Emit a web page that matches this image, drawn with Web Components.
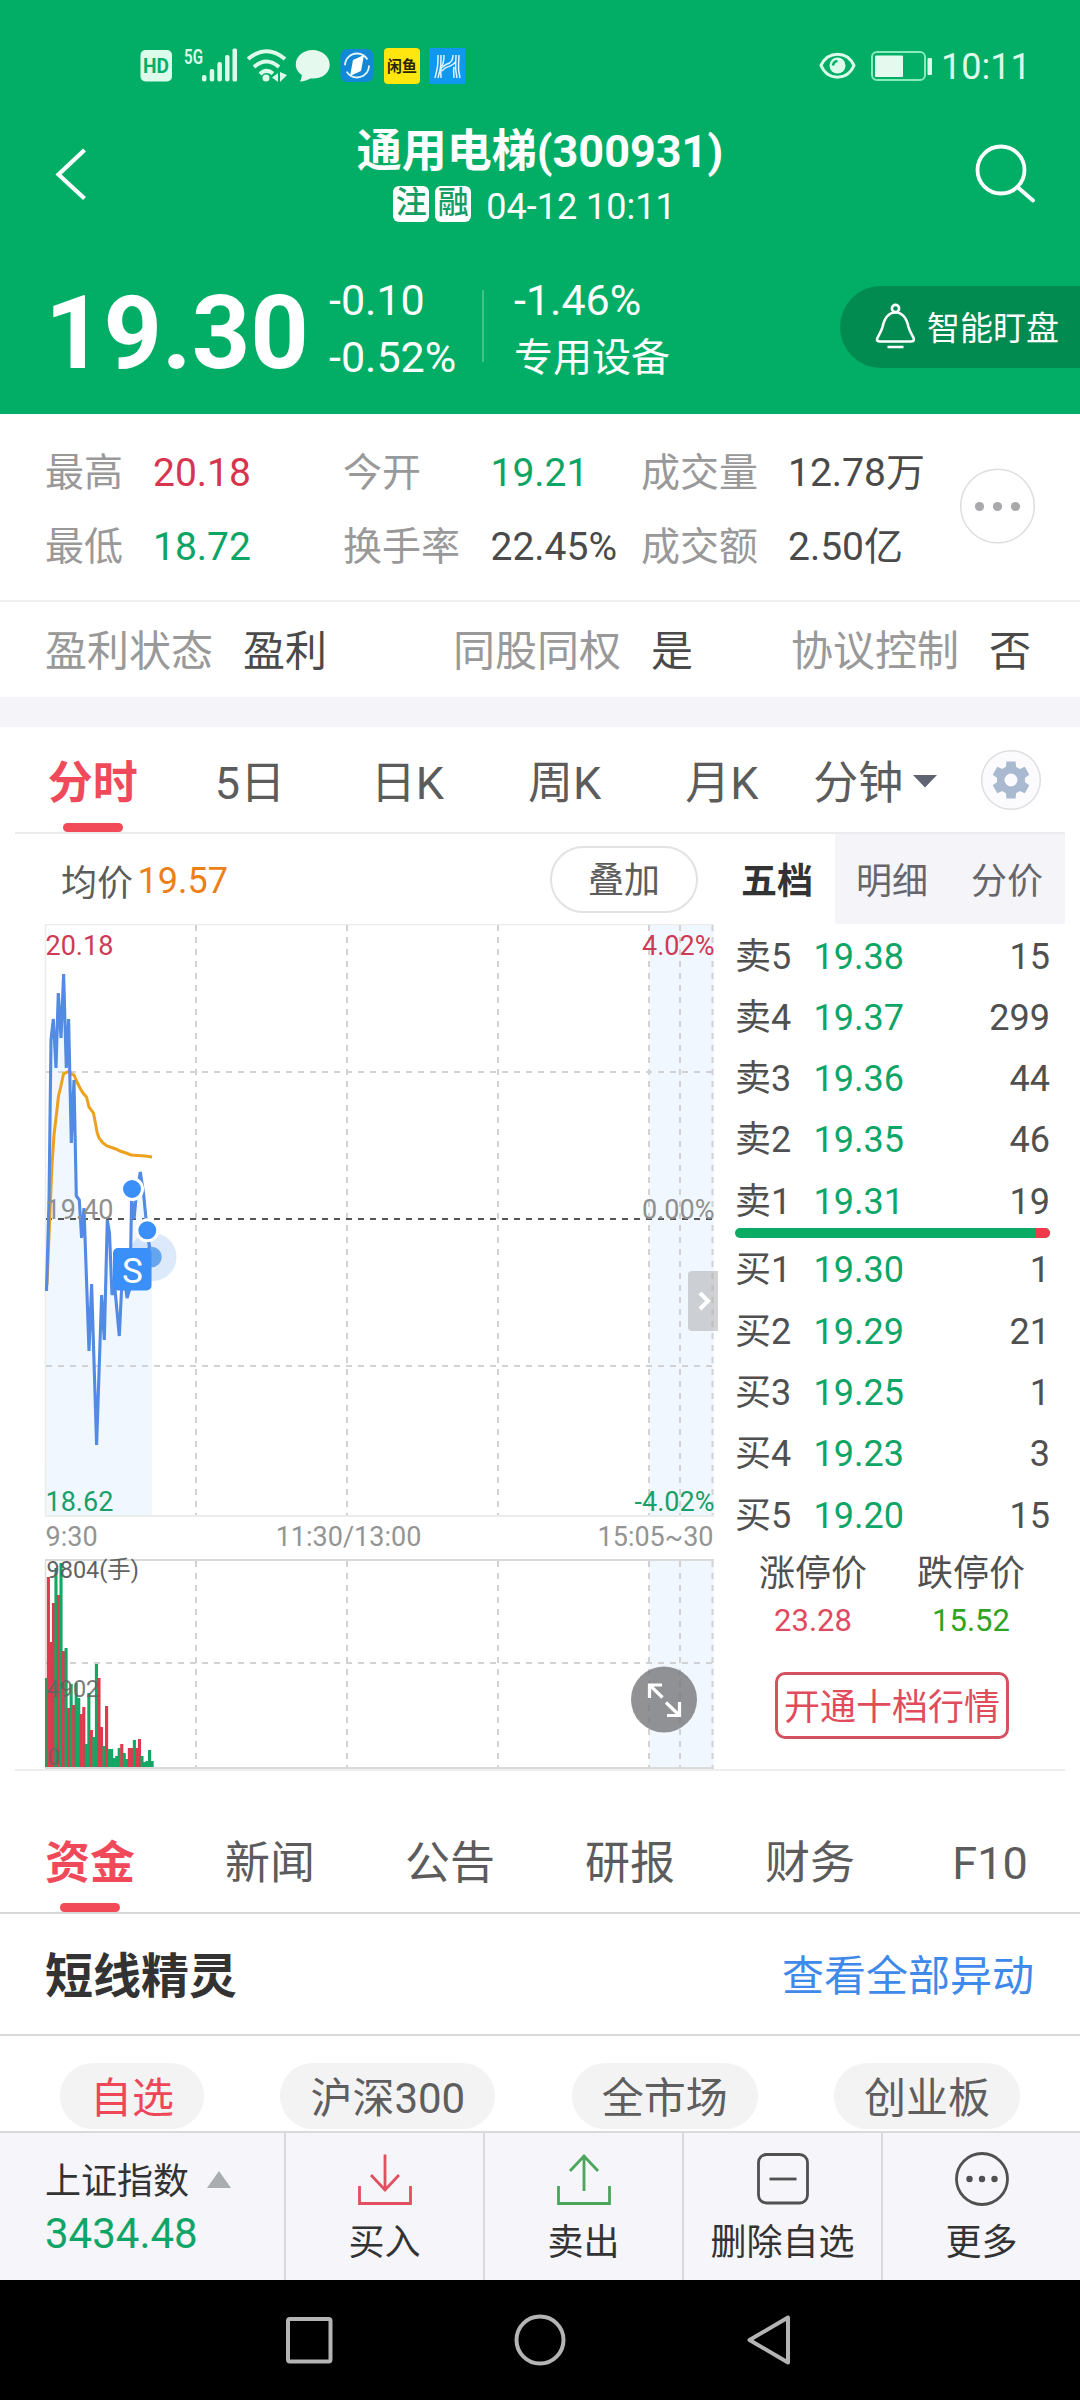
<!DOCTYPE html>
<html lang="zh-CN">
<head>
<meta charset="utf-8">
<meta name="viewport" content="width=1080">
<title>通用电梯(300931)</title>
<style>
  html, body { margin: 0; padding: 0; }
  body {
    width: 1080px; height: 2400px; overflow: hidden; background: #fff;
    font-family: Roboto, "Noto Sans CJK SC", sans-serif;
    --brand: #02ae66; --up: #d8344e; --down: #0ca565; --accent: #f04a5a;
    --text: #4a4a4a; --muted: #999; --panel: #f4f4f9;
  }
</style>
</head>
<body>
<stock-app></stock-app>

<script>
const define = (name, html, setup) => {
  const tpl = document.createElement('template');
  tpl.innerHTML = `<style>*{box-sizing:border-box} :host{display:block;box-sizing:border-box;white-space:nowrap} svg{display:block;flex:none}</style>` + html;
  customElements.define(name, class extends HTMLElement {
    constructor() {
      super();
      this.attachShadow({ mode: 'open' }).append(tpl.content.cloneNode(true));
      if (setup) setup(this, this.shadowRoot);
    }
  });
};

/* ---------- system status bar ---------- */
define('status-bar', `
<style>
  :host { height: 127px; padding: 4px 0 0 140px; display: flex; align-items: center; color: #dcfbea; }
  .time { font-size: 36px; line-height: 40px; margin: 3px 0 0 6px; width: 139px; }
</style>
<svg width="33" height="36"><rect x="0.5" y="2" width="31.5" height="31.5" rx="5" fill="#dcfbea"/><text x="16" y="25" text-anchor="middle" font-size="20" font-weight="700" textLength="26" lengthAdjust="spacingAndGlyphs" fill="#02ae66">HD</text></svg>
<svg width="54" height="52" viewBox="0 -8 54 52" style="margin-left:11px" fill="#dcfbea"><text x="0" y="15.500" font-size="20" font-weight="600" textLength="19" lengthAdjust="spacingAndGlyphs">5G</text><rect x="18" y="27" width="4.500" height="6.500" rx="2"/><rect x="25.700" y="21" width="4.500" height="12.500" rx="2"/><rect x="33.400" y="14" width="4.500" height="19.500" rx="2"/><rect x="41" y="7" width="4.500" height="26.500" rx="2"/><rect x="48.500" y="0.500" width="4.500" height="33" rx="1.500"/></svg>
<svg width="40" height="36" style="margin-left:9px" fill="none" stroke="#dcfbea" stroke-width="4"><path d="M1 11Q19.500-4.500 38 11M7 19Q19.500 8 32 19M13 26Q19 20 26 25.500"/><circle cx="19" cy="30" r="3.500" fill="#dcfbea" stroke="none"/><path d="M31 25v9l-6-4.500zM33 24v10l7-7z" fill="#dcfbea" stroke="none"/></svg>
<svg width="36" height="36" style="margin-left:8px"><path d="M17.500 2C8 2 .8 8.500 .8 16.500c0 4.500 2.500 8 6 10.500 0 2.500-.8 5-2 6.500 4.500 0 8-1.500 10.500-3 12 1 19.400-5.500 19.400-14C34.700 8.500 27 2 17.500 2z" fill="#e6f9ef"/></svg>
<svg width="34" height="36" style="margin-left:9px"><rect x="0.500" y="1" width="33" height="33" rx="7" fill="#1189d6"/><circle cx="17" cy="17.500" r="12" fill="none" stroke="#e6f5ff" stroke-width="1.800" stroke-dasharray="31 6.700"/><path d="M13 12l11-5-3 16-11 5z" fill="#fff"/></svg>
<svg width="36" height="36" style="margin-left:10px"><rect width="36" height="36" rx="4" fill="#ffe60f"/><text x="18" y="24" text-anchor="middle" font-size="15.500" font-weight="700" fill="#2a2608" textLength="30" lengthAdjust="spacingAndGlyphs">闲鱼</text></svg>
<svg width="36" height="36" style="margin-left:9px"><rect width="36" height="36" fill="#1098ef"/><g fill="none" stroke="#e2f4ff" stroke-width="1.500"><path d="M9 7C9 16 9 18 6 30M12 7C12 17 12 19 9 30M15 7C15 12 15 14 13 18M30 7C30 16 28 19 31 30M27 7C27 16 25 17 28 30M24 7C24 12 22 15 18 16L13 19C11 21 12 26 12 30M26 14C24 18 20 18 16 20L13 23M25 19C24 23 25 26 25 30"/></g></svg>
<svg width="37" height="30" style="margin-left:auto;margin-right:15px" fill="none" stroke="#dcfbea"><path d="M2 14.500C9-.5 28-.5 35 14.500 28 30 9 30 2 14.500z" stroke-width="3"/><circle cx="18.500" cy="14.500" r="8" fill="#dcfbea" stroke="none"/><path d="M14 14.500q.5-4 4.500-4.500" stroke="#02ae66" stroke-width="2.500"/></svg>
<svg width="64" height="32"><rect x="1" y="2" width="53" height="28" rx="5" fill="none" stroke="#86ecbc" stroke-width="2"/><rect x="4" y="5.500" width="28" height="21.500" rx="1" fill="#e6f9ef"/><rect x="56.500" y="8" width="4.500" height="17" rx="1" fill="#dcfbea"/></svg>
<div class="time">10:11</div>`);

/* ---------- title bar ---------- */
define('title-bar', `
<style>
  :host { height: 126px; display: grid; grid-template-columns: 200px 1fr 200px; align-items: start; color: #fff; }
  .name { font-size: 45px; line-height: 50px; font-weight: 700; text-align: center; }
  .meta { display: flex; justify-content: center; align-items: center; margin-top: 9px; height: 36px; font-size: 36px; padding-right: 11px; }
  .meta span { line-height: 40px; margin-left: 15px; padding-top: 5px; }
  i { font-style: normal; width: 36px; height: 36px; border-radius: 6px; background: #fff; color: #149c62; font-size: 31px; font-weight: 500; line-height: 34px; text-align: center; margin-right: 6px; }
  i + i { margin-right: 0; }
</style>
<svg width="60" height="60" style="margin:17px 0 0 45px"><path d="M39.500 6 13.500 30.500 39.500 54.500" fill="none" stroke="#fff" stroke-width="4.200"/></svg>
<div><div class="name"><slot></slot></div><div class="meta"><i>注</i><i>融</i><span><slot name="time"></slot></span></div></div>
<svg width="70" height="70" style="margin:13px 0 0 91px"><g fill="none" stroke="#fff" stroke-width="3.800" stroke-linecap="round"><circle cx="30" cy="30" r="23.500"/><path d="M47 47.500 62 60.500"/></g></svg>`);

/* ---------- price summary ---------- */
define('price-panel', `
<style>
  :host { height: 161px; padding: 0 0 9px 45px; display: flex; align-items: center; color: #fff; }
  .price { width: 284px; font-size: 102px; font-weight: 700; line-height: 110px; padding-top: 7px; }
  .col { font-size: 43px; line-height: 57px; }
  .chg { width: 153px; }
  .rule { width: 2px; height: 72px; margin: 0 30px 6px 0; background: rgba(255,255,255,.25); }
  .ind { font-size: 39px; padding: 1px 0 0 0; height: 57px; }
  .watch { margin: 0 0 5px auto; width: 240px; height: 82px; border-radius: 41px 0 0 41px; background: #028b51; display: flex; align-items: center; padding: 0 0 1px 35px; font-size: 33px; }
  .watch svg { margin-right: 12px; }
</style>
<div class="price">19.30</div>
<div class="col chg"><div>-0.10</div><div>-0.52%</div></div>
<div class="rule"></div>
<div class="col"><div>-1.46%</div><div class="ind">专用设备</div></div>
<div class="watch"><svg width="40" height="46" fill="none" stroke="#fff" stroke-width="2.600"><circle cx="20.500" cy="5.500" r="3.600"/><path d="M20.500 9.500C12 9.500 9 17 7.500 24 6 30 2 34 2 36.500 2 38 3 38.500 5 38.500H36C38 38.500 39 38 39 36.500 39 34 35 30 33.500 24 32 17 29 9.500 20.500 9.500zM12.500 44H28.500"/></svg>智能盯盘</div>`);

/* ---------- quote figures ---------- */
define('quote-stats', `
<style>
  :host { height: 188px; padding: 22px 0 0 45px; border-bottom: 2px solid #efefef; display: flex; font-size: 39px; line-height: 74px; color: var(--text); }
  .g { width: 915px; display: grid; grid-template-columns: 108px 190px 147.5px 150.5px 147px 1fr; grid-auto-rows: 74px; }
  .l { color: var(--muted); } .u { color: var(--up); } .d { color: var(--down); }
  svg { margin-top: 32px; }
</style>
<div class="g">
<span class="l">最高</span><span class="u">20.18</span><span class="l">今开</span><span class="d">19.21</span><span class="l">成交量</span><span>12.78万</span>
<span class="l">最低</span><span class="d">18.72</span><span class="l">换手率</span><span>22.45%</span><span class="l">成交额</span><span>2.50亿</span>
</div>
<svg width="76" height="77"><circle cx="37.500" cy="38" r="36.800" fill="none" stroke="#dedede" stroke-width="1.500"/><g fill="#a9a9ab"><circle cx="19.500" cy="38.500" r="4.600"/><circle cx="37.500" cy="38.500" r="4.600"/><circle cx="55.500" cy="38.500" r="4.600"/></g></svg>`);

define('flag-item', `
<style>:host { display: flex; gap: 30px; } .l { color: var(--muted); }</style>
<span class="l"><slot name="label"></slot></span><span><slot></slot></span>`);

define('listing-flags', `
<style>
  :host { height: 95px; padding: 4px 0 0 45px; display: grid; grid-template-columns: 408px 338px auto; align-items: center; font-size: 42px; line-height: 60px; color: var(--text); }
</style>
<flag-item><span slot="label">盈利状态</span>盈利</flag-item>
<flag-item><span slot="label">同股同权</span>是</flag-item>
<flag-item><span slot="label">协议控制</span>否</flag-item>`);

/* ---------- period tabs ---------- */
define('tab-item', `
<style>
  :host { flex: 1; display: flex; flex-direction: column; align-items: center; justify-content: flex-end; color: #5c5c5c; font-size: 45px; height: 100%; }
  .t { display: flex; align-items: center; line-height: 60px; }
  .bar { width: 60px; height: 9px; border-radius: 5px; margin-top: 9.5px; }
  :host([active]) { color: var(--accent); font-weight: 700; }
  :host([active]) .bar { background: #f24a57; }
</style><div class="t"><slot></slot></div><div class="bar"></div>`);

define('period-tabs', `
<style>
  :host { height: 107px; margin: 0 15px; display: flex; border-bottom: 2px solid #ececee; align-items: center; }
  .tabs { width: 944px; height: 105px; display: flex; margin-left: -1px; }
  .tri { margin: 0 8px 4px 10px; }
</style>
<div class="tabs"><tab-item active>分时</tab-item><tab-item>5日</tab-item><tab-item>日K</tab-item><tab-item>周K</tab-item><tab-item>月K</tab-item><tab-item>分钟<svg class="tri" width="24" height="13"><path d="M0 0H24L12 12.500z" fill="#5f6372"/></svg></tab-item></div>
<svg width="62" height="62" style="margin-left:22px"><circle cx="31" cy="31" r="29.300" fill="#fbfbfd" stroke="#dfdfe3" stroke-width="1.500"/><g transform="translate(31 31)" fill="#a9bad0"><g id="teeth"></g><path fill-rule="evenodd" d="M0-14A14 14 0 1 0 0 14 14 14 0 1 0 0-14zM0-6.500A6.500 6.500 0 1 1 0 6.500 6.500 6.500 0 1 1 0-6.500z"/></g></svg>`,
(host, root) => {
  root.getElementById('teeth').innerHTML = [0, 60, 120, 180, 240, 300].map(a => `<path transform="rotate(${a})" d="M-5.500-10 -4.500-18.500H4.500L5.500-10z"/>`).join('');
});

/* ---------- intraday price and volume chart ---------- */
define('intraday-chart', `
<style>
  :host { width: 705px; }
  .legend { height: 90px; padding: 0 22px 0 46px; display: flex; align-items: center; font-size: 36px; color: #5c5c5c; }
  .legend span { padding-top: 1px; }
  .legend .avg { color: #ee7f18; margin-left: 4.5px; padding-top: 3px; }
  .add { margin-left: auto; width: 148px; height: 67px; border: 2px solid #e2e2e2; border-radius: 34px; text-align: center; line-height: 66px; }
</style>
<div class="legend"><span>均价</span><span class="avg">19.57</span><div class="add">叠加</div></div>
<svg width="705" height="846" viewBox="15 924 705 846" font-size="27">
  <rect x="649" y="925" width="65" height="590" fill="#f1f7fe"/><rect x="649" y="1560" width="65" height="208" fill="#f1f7fe"/>
  <path id="area" fill="#f0f7fe"/>
  <g stroke="#ececec" stroke-width="1.500" fill="none"><path d="M45.500 1515.500V924.500H714"/><path d="M45 1516H714" stroke-width="2"/><path d="M45.500 1560V1767" stroke="#ddd"/></g>
  <g stroke="#d2d2d4" stroke-width="2" stroke-dasharray="6 6" fill="none">
    <path d="M196 925V1515M347 925V1515M498 925V1515M649 925V1515M680 925V1515M712.500 925V1515M46 1072H713M46 1366H713"/>
    <path d="M196 1561V1767M347 1561V1767M498 1561V1767M649 1561V1767M680 1561V1767M712.500 1561V1767M46 1663H713"/>
  </g>
  <path d="M46 1219H713" stroke="#555" stroke-width="2" stroke-dasharray="6 6"/>
  <g id="bars"></g>
  <path d="M45 1560H714M45 1768H714" stroke="#dadada" stroke-width="2"/>
  <polyline fill="none" stroke="#eca11f" stroke-width="3" points="47,1285 50.500,1200 52,1165 54,1135 56.500,1114 58.500,1096 60.500,1088 63.500,1074 66,1072.500 69,1071.300 72,1074.500 74,1075 77,1082 80,1088 83,1093 86.500,1097 89,1107 93.500,1113 95,1121 97,1132 99,1138 103,1143 107,1146 113,1148 116,1149 120,1151 126,1153 131,1155 138,1155.500 145,1156 152,1157"/>
  <polyline id="line" fill="none" stroke="#528ae4" stroke-width="3.100" stroke-linejoin="bevel" points="46.500,1291 49,1200 50,1120 51,1040 53.300,1019 56,1068 58.300,993 61,1038 63.600,974 66.300,1068 68.600,1019 71.300,1143 74,1080 76.300,1196 79.300,1200 81.600,1238 84,1208 89,1351 91.600,1284 96.600,1445 101.600,1295 104.300,1340 107.300,1220 109.500,1233 112,1295 114.600,1285 119.300,1336 122,1280 124.500,1277 127,1298 130,1288 131.600,1198 134,1219 136,1198 140.300,1172 143.500,1193 146,1219 149,1244 152,1257"/>
  <circle cx="152.500" cy="1257" r="24" fill="#4a90e8" fill-opacity=".2"/><circle cx="151.500" cy="1257" r="10.300" fill="#66a6ef"/>
  <path d="M149 1242V1256" stroke="#528ae4" stroke-width="2.500"/>
  <g fill="#3a8ff8" stroke="#fff" stroke-width="3"><circle cx="132" cy="1189" r="10.500"/><circle cx="147.300" cy="1230.300" r="10.500"/></g>
  <rect x="113" y="1248" width="38.500" height="42.500" rx="5" fill="#3a8ff8"/><text x="132.500" y="1283" text-anchor="middle" font-size="35" fill="#fff">S</text>
  <text x="45.500" y="955" fill="#cf3a55">20.18</text><text x="714.500" y="955" text-anchor="end" fill="#cf3a55">4.02%</text>
  <text x="45.500" y="1218.500" fill="#8f8f8f">19.40</text><text x="714.500" y="1218.500" text-anchor="end" fill="#8f8f8f">0.00%</text>
  <text x="45.500" y="1510.500" fill="#199f68">18.62</text><text x="714.500" y="1510.500" text-anchor="end" fill="#199f68">-4.02%</text>
  <g fill="#949494"><text x="45.500" y="1546">9:30</text><text x="348.500" y="1546" text-anchor="middle">11:30/13:00</text><text x="713.500" y="1546" text-anchor="end">15:05~30</text></g>
  <g fill="#626262" font-size="23.500"><text x="46.500" y="1578">9804(手)</text><text x="46.500" y="1697" fill-opacity=".85">4902</text><text x="47" y="1765" fill-opacity=".7">0</text></g>
  <path d="M718 1271H692Q688 1271 688 1275V1327Q688 1331 692 1331H718z" fill="#a8a8a8" fill-opacity=".5"/><path d="M700 1293 708 1301 700 1309" fill="none" stroke="#fff" stroke-width="4"/>
  <circle cx="664" cy="1699.500" r="33" fill="#77777a" fill-opacity=".8"/>
  <g fill="none" stroke="#fff" stroke-width="3.200"><path d="M662 1685H649.500V1698M650 1685.500 662.500 1697.500M667 1715.500H679.500V1702M679 1715 666 1702.500"/></g>
</svg>`,
(host, root) => {
  const pts = root.getElementById('line').getAttribute('points');
  root.getElementById('area').setAttribute('d', 'M46 1515L' + pts.split(' ').join('L') + 'V1515z');
  // One entry per minute: colour (r/g) and the top of the bar
  const bars = 'g1678 r1577 r1642 r1603 g1568 r1595 g1563 r1651 g1648 r1708 g1684 r1705 g1683 g1698 r1714 r1707 g1744 g1693 r1730 g1737 g1664 r1678 r1727 g1746 r1706 g1749 g1749 g1758 g1756 g1748 r1744 g1753 g1759 r1748 r1748 g1740 r1748 r1739 g1756 g1762 g1761 g1750 g1761'.split(' ');
  root.getElementById('bars').innerHTML = bars.map((b, i) => {
    const y = +b.slice(1), x = Math.max(45, 44.3 + 2.53 * i);
    return `<rect x="${x.toFixed(2)}" y="${y}" width="3.1" height="${1767 - y}" fill="${b[0] === 'r' ? '#dd3a4e' : '#12a762'}"/>`;
  }).join('');
});

/* ---------- order book ---------- */
define('depth-row', `
<style>
  :host { display: flex; height: 61.3px; line-height: 61.3px; font-size: 36px; color: #505050; }
  .n { width: 78.5px; } .p { color: #0ea566; } .q { margin-left: auto; }
</style><span class="n"></span><span class="p"></span><span class="q"></span>`);

define('order-book', `
<style>
  :host { width: 345px; }
  .tabs { display: grid; grid-template-columns: 1fr 1fr 1fr; height: 90px; line-height: 90px; text-align: center; font-size: 36px; color: #66666c; background: var(--panel); }
  .tabs div { padding: 3px 1px 0 0; }
  .tabs .on { background: #fff; color: #333; font-weight: 700; }
  .body { padding: 2.5px 15px 0 15px; }
  .ratio { display: flex; height: 9.5px; margin: -4.5px 0 2.5px 0; border-radius: 5px; overflow: hidden; background: #0aab64; }
  .ratio i { margin-left: auto; width: 15px; background: #f03a4c; }
  .limits { display: grid; grid-template-columns: 158px 158px; padding: 5px 0 0 14px; text-align: center; line-height: 45px; font-size: 36px; color: #505050; row-gap: 1px; }
  .limits .v { font-size: 31px; }
  .open { width: 234px; height: 67px; margin: 29px 0 0 55px; border: 3px solid #d4525f; border-radius: 10px; color: #e04c5c; text-align: center; line-height: 66px; font-size: 36px; }
</style>
<div class="tabs"><div class="on">五档</div><div>明细</div><div>分价</div></div>
<div class="body"><div id="asks"></div><div class="ratio"><i></i></div><div id="bids"></div></div>
<div class="limits"><span>涨停价</span><span>跌停价</span><span class="v" style="color:#e04a60">23.28</span><span class="v" style="color:#2fa323">15.52</span></div>
<div class="open">开通十档行情</div>`,
(host, root) => {
  const fill = (id, rows) => rows.forEach(([n, p, q]) => {
    const row = document.createElement('depth-row'), r = row.shadowRoot;
    r.querySelector('.n').textContent = n;
    r.querySelector('.p').textContent = p;
    r.querySelector('.q').textContent = q;
    root.getElementById(id).append(row);
  });
  fill('asks', [['卖5', '19.38', 15], ['卖4', '19.37', 299], ['卖3', '19.36', 44], ['卖2', '19.35', 46], ['卖1', '19.31', 19]]);
  fill('bids', [['买1', '19.30', 1], ['买2', '19.29', 21], ['买3', '19.25', 1], ['买4', '19.23', 3], ['买5', '19.20', 15]]);
});

/* ---------- information sections ---------- */
define('section-tabs', `
<style>:host { height: 143px; display: flex; border-bottom: 2px solid #d9d9d9; }</style>
<tab-item active>资金</tab-item><tab-item>新闻</tab-item><tab-item>公告</tab-item><tab-item>研报</tab-item><tab-item>财务</tab-item><tab-item>F10</tab-item>`);

define('section-head', `
<style>
  :host { height: 122px; padding: 0 46px 4px 45px; display: flex; align-items: center; justify-content: space-between; border-bottom: 2px solid #d9d9d9; font-size: 48px; font-weight: 700; color: #333; }
  .more { font-size: 42px; font-weight: 400; color: #3f89ea; }
</style><div><slot></slot></div><div class="more"><slot name="more"></slot></div>`);

define('filter-chip', `
<style>
  :host { height: 66px; padding: 4px 30px 0; border-radius: 33px; background: #f3f3f4; color: #5e5e5e; font-size: 42px; line-height: 63px; }
  :host([active]) { color: #ee4757; }
</style><slot></slot>`);

define('filter-row', `
<style>:host { height: 95px; padding: 27px 0 0 60px; display: flex; align-items: flex-start; gap: 76.4px; }</style>
<filter-chip active>自选</filter-chip><filter-chip>沪深300</filter-chip><filter-chip>全市场</filter-chip><filter-chip>创业板</filter-chip>`);

/* ---------- bottom actions ---------- */
define('trade-action', `
<style>
  :host { flex: 1; border-left: 2px solid #d9d9dc; display: flex; flex-direction: column; align-items: center; padding-top: 16px; font-size: 36px; line-height: 50px; color: #333; }
  .t { margin-top: 9px; }
</style><slot name="icon"></slot><div class="t"><slot></slot></div>`);

define('trade-bar', `
<style>
  :host { height: 149px; border-top: 2px solid #d9d9dc; background: #f5f5fa; display: flex; }
  .idx { width: 284px; padding: 24px 0 0 45px; }
  .n { display: flex; align-items: center; font-size: 36px; line-height: 50px; color: #333; }
  .v { font-size: 42px; line-height: 54px; color: #0fa566; }
</style>
<div class="idx"><div class="n">上证指数<svg width="24" height="17" style="margin:-6px 0 0 18px"><path d="M0 17 12 0 24 17z" fill="#a9adb0"/></svg></div><div class="v">3434.48</div></div>
<trade-action><svg slot="icon" width="60" height="60" fill="none" stroke="#e25060" stroke-width="2.800"><path d="M30 5.500V42M16 26 30 41 44 26M4.500 37V54.500H55.500V37"/></svg>买入</trade-action>
<trade-action><svg slot="icon" width="60" height="60" fill="none" stroke="#4ba65c" stroke-width="2.800"><path d="M30 42V6M16 22 30 7 44 22M4.500 37V54.500H55.500V37"/></svg>卖出</trade-action>
<trade-action><svg slot="icon" width="60" height="60" fill="none" stroke="#505050" stroke-width="2.800"><rect x="5.500" y="5.500" width="49" height="48.500" rx="8"/><path d="M16.500 30H43.500"/></svg>删除自选</trade-action>
<trade-action><svg slot="icon" width="60" height="60" fill="#505050"><circle cx="30" cy="30" r="25.500" fill="none" stroke="#505050" stroke-width="2.800"/><circle cx="17.500" cy="30" r="3.200"/><circle cx="30" cy="30" r="3.200"/><circle cx="42.500" cy="30" r="3.200"/></svg>更多</trade-action>`);

define('system-nav', `
<style>:host { height: 120px; background: #000; display: flex; justify-content: center; align-items: center; gap: 170px; }</style>
<svg width="60" height="60"><rect x="8" y="9" width="42.500" height="42.500" rx="2" fill="none" stroke="#b4b4b4" stroke-width="4"/></svg>
<svg width="60" height="60"><circle cx="30" cy="30" r="23.500" fill="none" stroke="#b4b4b4" stroke-width="4"/></svg>
<svg width="60" height="60"><path d="M9.500 30 48 7.500V52.500z" fill="none" stroke="#b4b4b4" stroke-width="4" stroke-linejoin="round"/></svg>`);

define('stock-app', `
<style>
  :host { width: 1080px; height: 2400px; }
  header { height: 414px; background: var(--brand); }
  .band { height: 30px; background: var(--panel); }
  .main { display: flex; margin: 0 15px; height: 937px; border-bottom: 2px solid #eee; }
</style>
<header><status-bar></status-bar><title-bar>通用电梯(300931)<span slot="time">04-12 10:11</span></title-bar><price-panel></price-panel></header>
<quote-stats></quote-stats>
<listing-flags></listing-flags>
<div class="band"></div>
<period-tabs></period-tabs>
<div class="main"><intraday-chart></intraday-chart><order-book></order-book></div>
<section-tabs></section-tabs>
<section-head>短线精灵<span slot="more">查看全部异动</span></section-head>
<filter-row></filter-row>
<trade-bar></trade-bar>
<system-nav></system-nav>`);
</script>
</body>
</html>
